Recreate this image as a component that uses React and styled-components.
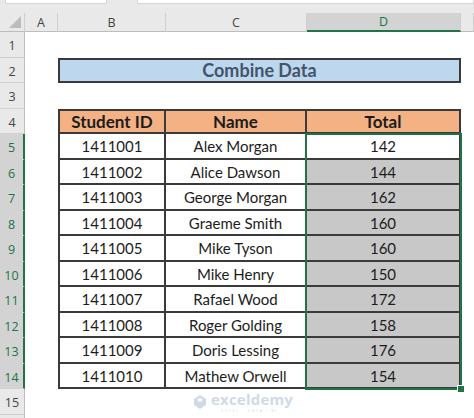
import React from 'react';
import styled, { createGlobalStyle } from 'styled-components';

const GlobalStyle = createGlobalStyle`
  body {
    margin: 0;
    background: #fff;
    font-family: Lato, "Liberation Sans", sans-serif;
  }
`;

const GREEN = '#217346';

const Sheet = styled.div`
  display: grid;
  grid-template-columns: 25px 33px 108px 141px 154px 13px;
  grid-template-rows: 13px 19px repeat(16, 25.5px);
  width: 474px;
  height: 418px;
  overflow: hidden;
  background: #fff;
`;

const FormulaStub = styled.div`
  grid-column: 1 / -1;
  grid-row: 1;
  background: #e9e9e9;
  display: flex;
  align-items: flex-start;
  gap: 30px;
  padding-left: 5px;
`;

const StubBox = styled.div`
  height: 3px;
  width: ${p => p.w}px;
  flex: ${p => (p.grow ? 1 : 'none')};
  background: #fff;
  border: 1px solid #d6d6d6;
  border-top: none;
`;

const Corner = styled.div`
  grid-column: 1;
  grid-row: 2;
  background: #e9e9e9;
  border-right: 1px solid #cfcfcf;
  border-bottom: 1px solid #bdbdbd;
  display: flex;
  align-items: flex-end;
  justify-content: flex-end;
  padding: 0 3px 3px 0;
`;

const ColHead = styled.div`
  grid-column: ${p => p.col};
  grid-row: 2;
  background: ${p => (p.active ? '#d3d3d3' : '#e9e9e9')};
  color: ${p => (p.active ? GREEN : '#444')};
  border-right: 1px solid #cfcfcf;
  border-bottom: ${p => (p.active ? `2px solid ${GREEN}` : '1px solid #bdbdbd')};
  font-family: "Open Sans", "Liberation Sans", sans-serif;
  font-size: 12.5px;
  display: flex;
  align-items: center;
  justify-content: center;
`;

const RowHead = styled.div`
  grid-column: 1;
  grid-row: ${p => p.row + 2};
  background: ${p => (p.active ? '#d3d3d3' : '#e9e9e9')};
  color: ${p => (p.active ? GREEN : '#444')};
  border-right: ${p => (p.active ? `2px solid ${GREEN}` : '1px solid #bdbdbd')};
  border-bottom: 1px solid #d2d2d2;
  font-family: "Open Sans", "Liberation Sans", sans-serif;
  font-size: 12.5px;
  display: flex;
  align-items: center;
  justify-content: center;
  padding-top: 3px;
`;

const Banner = styled.div`
  grid-column: 3 / 6;
  grid-row: 4;
  background: #bdd7ee;
  border: 2px solid #3a3a3a;
  color: #44546a;
  font-size: 18px;
  font-weight: 700;
  display: flex;
  align-items: center;
  justify-content: center;
`;

const Cell = styled.div`
  grid-column: ${p => p.col};
  grid-row: ${p => p.row + 2};
  background: ${p => p.bg || '#fff'};
  border-right: 2px solid #3a3a3a;
  border-bottom: 2px solid #3a3a3a;
  border-left: ${p => (p.col === 3 ? '2px solid #3a3a3a' : 'none')};
  border-top: ${p => (p.top ? '2px solid #3a3a3a' : 'none')};
  color: #1c1c1c;
  font-size: ${p => (p.head ? '17px' : '15px')};
  font-weight: ${p => (p.head ? 700 : 400)};
  display: flex;
  align-items: center;
  justify-content: center;
  padding-top: 1px;
`;

const Selection = styled.div`
  grid-column: 5;
  grid-row: 7 / 17;
  margin: -1px -1px -1px -2px;
  border: 2px solid ${GREEN};
  position: relative;
  pointer-events: none;
`;

const FillHandle = styled.span`
  position: absolute;
  right: -5px;
  bottom: -5px;
  width: 6px;
  height: 6px;
  background: ${GREEN};
  border: 1px solid #fff;
`;

const Watermark = styled.div`
  grid-column: 4;
  grid-row: 17;
  display: flex;
  align-items: center;
  gap: 3px;
  padding: 1px 0 0 26px;
  opacity: 0.4;
`;

const MarkText = styled.div`
  display: flex;
  flex-direction: column;
  gap: 1px;
  color: #8ea3bf;
  font-family: "Open Sans", "Liberation Sans", sans-serif;
`;

const MarkName = styled.span`
  font-size: 15px;
  line-height: 15px;
  font-weight: 700;
  letter-spacing: 0.2px;
`;

const MarkSub = styled.span`
  font-size: 4px;
  line-height: 5px;
  letter-spacing: 1.5px;
  padding-left: 10px;
`;

const rows = [
  ['1411001', 'Alex Morgan', 142],
  ['1411002', 'Alice Dawson', 144],
  ['1411003', 'George Morgan', 162],
  ['1411004', 'Graeme Smith', 160],
  ['1411005', 'Mike Tyson', 160],
  ['1411006', 'Mike Henry', 150],
  ['1411007', 'Rafael Wood', 172],
  ['1411008', 'Roger Golding', 158],
  ['1411009', 'Doris Lessing', 176],
  ['1411010', 'Mathew Orwell', 154],
];

export default function App() {
  return (
    <>
      <GlobalStyle />
      <Sheet>
        <FormulaStub>
          <StubBox w={100} />
          <StubBox grow />
        </FormulaStub>

        <Corner>
          <svg width="12" height="12" viewBox="0 0 12 12">
            <polygon points="12,0 12,12 0,12" fill="#bcbcbc" />
          </svg>
        </Corner>
        <ColHead col={2}>A</ColHead>
        <ColHead col={3}>B</ColHead>
        <ColHead col={4}>C</ColHead>
        <ColHead col={5} active>D</ColHead>
        <ColHead col={6} />

        {Array.from({ length: 16 }, (_, i) => (
          <RowHead key={i} row={i + 1} active={i + 1 >= 5 && i + 1 <= 14}>
            {i < 15 ? i + 1 : ''}
          </RowHead>
        ))}

        <Banner>Combine Data</Banner>

        <Cell row={4} col={3} head top bg="#f4b183">Student ID</Cell>
        <Cell row={4} col={4} head top bg="#f4b183">Name</Cell>
        <Cell row={4} col={5} head top bg="#f4b183">Total</Cell>

        {rows.map(([id, name, total], i) => (
          <React.Fragment key={id}>
            <Cell row={i + 5} col={3}>{id}</Cell>
            <Cell row={i + 5} col={4}>{name}</Cell>
            <Cell row={i + 5} col={5} bg={i === 0 ? '#fff' : '#c8c8c8'}>{total}</Cell>
          </React.Fragment>
        ))}

        <Selection>
          <FillHandle />
        </Selection>

        <Watermark>
          <svg width="16" height="16" viewBox="0 0 16 16">
            <path d="M8 1 L14 5 L14 11 L8 15 L2 11 L2 5 Z" fill="#8ea3bf" />
            <path d="M5 6 L8 4 L11 6 L8 8 Z" fill="#fff" />
          </svg>
          <MarkText>
            <MarkName>exceldemy</MarkName>
            <MarkSub>EXCEL · DATA · BI</MarkSub>
          </MarkText>
        </Watermark>
      </Sheet>
    </>
  );
}
